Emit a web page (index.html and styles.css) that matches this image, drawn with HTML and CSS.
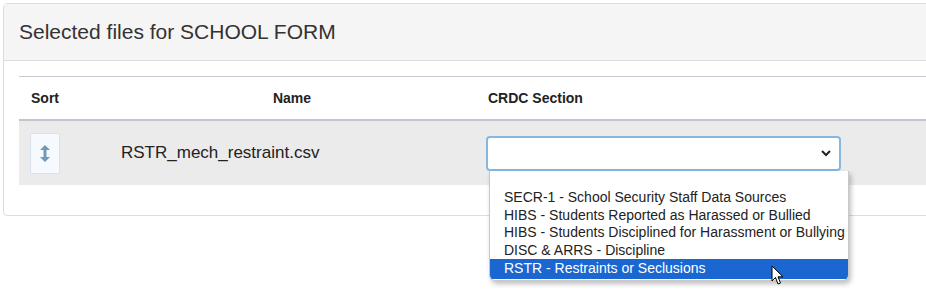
FILE: index.html
```html
<!DOCTYPE html>
<html>
<head>
    <meta charset="utf-8" />
    <title>Selected files</title>
    <link rel="stylesheet" href="styles.css">
</head>
<body>
    <div class="page">
    <div class="panel">
        <div class="panel_heading">Selected files for SCHOOL FORM</div>
        <div class="panel_body">
            <table class="files">
                <thead>
                    <tr>
                        <th class="col_sort">Sort</th>
                        <th class="col_name">Name</th>
                        <th class="col_section">CRDC Section</th>
                    </tr>
                </thead>
                <tbody>
                    <tr>
                        <td class="col_sort">
                            <button class="sort_btn" type="button">
                                <svg width="10" height="17" viewBox="0 0 10 17">
                                    <path d="M5 0 L10 5 L6.5 5 L6.5 12 L10 12 L5 17 L0 12 L3.5 12 L3.5 5 L0 5 Z" fill="#7399b8"/>
                                </svg>
                            </button>
                        </td>
                        <td class="cell_name">RSTR_mech_restraint.csv</td>
                        <td class="cell_section">
                            <div class="select_wrap">
                                <div class="fake_select">
                                    <svg class="chevron" width="10" height="7" viewBox="0 0 10 7">
                                        <path d="M1 1 L5 5 L9 1" fill="none" stroke="#222" stroke-width="2"/>
                                    </svg>
                                </div>
                                <ul class="options">
                                    <li>&nbsp;</li>
                                    <li>SECR-1 - School Security Staff Data Sources</li>
                                    <li>HIBS - Students Reported as Harassed or Bullied</li>
                                    <li>HIBS - Students Disciplined for Harassment or Bullying</li>
                                    <li>DISC &amp; ARRS - Discipline</li>
                                    <li class="active">RSTR - Restraints or Seclusions</li>
                                </ul>
                                <svg class="cursor" width="14" height="21" viewBox="0 0 14 21">
                                    <path d="M1 1 L1 16 L4.5 12.5 L7 19 L9.5 18 L7 11.8 L12 11.8 Z" fill="#fff" stroke="#000" stroke-width="1"/>
                                </svg>
                            </div>
                        </td>
                    </tr>
                </tbody>
            </table>
        </div>
    </div>
    </div>
</body>
</html>
```

FILE: styles.css
```css
body {
    margin: 0;
    background-color: white;
    color: #333;
    font-family: "Liberation Sans", Arial, sans-serif;
}

.page {
    width: 926px;
    height: 293px;
    overflow: hidden;
}

.panel {
    margin: 3px 0 0 3px;
    width: 1000px;
    border: 1px solid #dddddd;
    border-radius: 4px;
}

.panel_heading {
    background-color: #f5f5f5;
    border-bottom: 1px solid #dddddd;
    padding: 17px 15px 18px 15px;
    font-size: 21px;
    line-height: 21px;
    color: #333;
}

.panel_body {
    padding: 15px 15px 30px 15px;
}

.files {
    border-collapse: collapse;
    width: 100%;
}

.files th {
    border-top: 1px solid #c3c9cf;
    border-bottom: 2px solid #bfc6cd;
    font-size: 14px;
    font-weight: bold;
    color: #222;
    height: 42px;
    padding: 0;
    text-align: left;
}

.files th.col_sort {
    width: 78px;
    padding-left: 12px;
}

.files th.col_name {
    width: 366px;
    text-align: center;
}

.files th.col_section {
    padding-left: 13px;
}

.files td {
    background-color: #ebebeb;
    height: 64px;
    padding: 0;
    vertical-align: middle;
}

.files td.col_sort {
    padding-left: 11px;
}

.sort_btn {
    display: flex;
    align-items: center;
    justify-content: center;
    width: 30px;
    height: 41px;
    padding: 0;
    background-color: #f6f9fe;
    border: 1px solid #d9e2ea;
    border-radius: 1px;
}

.cell_name {
    font-size: 17px;
    color: #222;
    padding-left: 12px !important;
}

.cell_section {
    padding-left: 11px !important;
}

.select_wrap {
    position: relative;
    width: 355px;
}

.fake_select {
    box-sizing: border-box;
    height: 35px;
    border: 2px solid #86b6e4;
    border-radius: 4px;
    background-color: white;
    display: flex;
    align-items: center;
    justify-content: flex-end;
    padding-right: 8px;
}

.options {
    position: absolute;
    left: 3px;
    top: 35px;
    width: 358px;
    margin: 0;
    padding: 1px 0 1px 0;
    list-style: none;
    background-color: white;
    border: 1px solid #c8c8c8;
    border-top: none;
    border-radius: 0 0 6px 6px;
    box-shadow: 2px 3px 5px rgba(0, 0, 0, 0.25);
    overflow: hidden;
    font-size: 14px;
    line-height: 17.6px;
    color: #222;
}

.options li {
    padding-left: 14px;
    white-space: nowrap;
}

.options li.active {
    background-color: #1a67d2;
    color: white;
    padding-top: 1px;
    padding-bottom: 1px;
}

.cursor {
    position: absolute;
    left: 285px;
    top: 129px;
}
```
